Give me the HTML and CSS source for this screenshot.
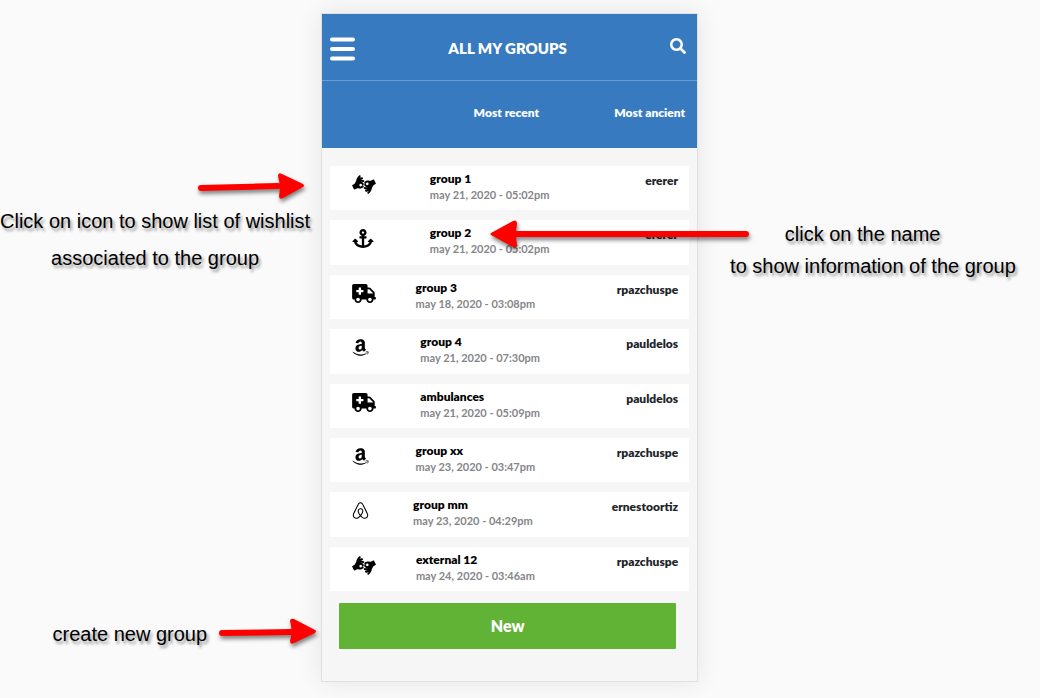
FILE: index.html
```html
<!DOCTYPE html>
<html lang="en">
<head>
<meta charset="utf-8">
<meta name="viewport" content="width=device-width, initial-scale=1">
<title>All my groups</title>
<link rel="stylesheet" href="styles.css">
</head>
<body>
<svg class="sprite" aria-hidden="true">
  <symbol id="signs" viewBox="0 0 640 512"><path d="M290.547 189.039c-20.295-10.149-44.147-11.199-64.739-3.89 42.606 0 71.208 20.475 85.578 50.576 8.576 17.899-5.148 38.071-23.617 38.071 18.429 0 32.211 20.136 23.632 38.071-14.725 30.846-46.123 50.854-80.298 50.854-.557 0-94.471-8.615-94.471-8.615l-66.406 33.347c-9.384 4.693-19.815.379-23.895-7.781L1.86 290.747c-4.167-8.615-1.111-18.897 6.946-23.621l58.072-33.069L108 159.861c6.39-57.245 34.731-109.767 79.743-146.726 11.391-9.448 28.341-7.781 37.51 3.613 9.446 11.394 7.78 28.067-3.612 37.516-12.503 10.559-23.618 22.509-32.509 35.57 21.672-14.729 46.679-24.732 74.186-28.067 14.725-1.945 28.063 8.336 29.73 23.065 1.945 14.728-8.336 28.067-23.062 29.734-16.116 1.945-31.12 7.503-44.178 15.284 26.114-5.713 58.712-3.138 88.079 11.115 13.336 6.669 18.893 22.509 12.224 35.848-6.389 13.06-22.504 18.617-35.564 12.226zm-27.229 69.472c-6.112-12.505-18.338-20.286-32.231-20.286a35.46 35.46 0 0 0-35.565 35.57c0 21.428 17.808 35.57 35.565 35.57 13.893 0 26.119-7.781 32.231-20.286 4.446-9.449 13.614-15.006 23.339-15.284-9.725-.277-18.893-5.835-23.339-15.284zm374.821-37.237c4.168 8.615 1.111 18.897-6.946 23.621l-58.071 33.069L532 352.16c-6.39 57.245-34.731 109.767-79.743 146.726-10.932 9.112-27.799 8.144-37.51-3.613-9.446-11.394-7.78-28.067 3.613-37.516 12.503-10.559 23.617-22.509 32.508-35.57-21.672 14.729-46.679 24.732-74.186 28.067-10.021 2.506-27.552-5.643-29.73-23.065-1.945-14.728 8.336-28.067 23.062-29.734 16.116-1.946 31.12-7.503 44.178-15.284-26.114 5.713-58.712 3.138-88.079-11.115-13.336-6.669-18.893-22.509-12.224-35.848 6.389-13.061 22.505-18.619 35.565-12.227 20.295 10.149 44.147 11.199 64.739 3.89-42.606 0-71.208-20.475-85.578-50.576-8.576-17.899 5.148-38.071 23.617-38.071-18.429 0-32.211-20.136-23.633-38.071 14.033-29.396 44.039-50.887 81.966-50.854l92.803 8.615 66.406-33.347c9.408-4.704 19.828-.354 23.894 7.781l44.455 88.926zm-229.227-18.618c-13.893 0-26.119 7.781-32.231 20.286-4.446 9.449-13.614 15.006-23.339 15.284 9.725.278 18.893 5.836 23.339 15.284 6.112 12.505 18.338 20.286 32.231 20.286a35.46 35.46 0 0 0 35.565-35.57c0-21.429-17.808-35.57-35.565-35.57z"/></symbol>
  <symbol id="anchor" viewBox="0 0 576 512"><path d="M12.971 352h32.394C67.172 454.735 181.944 512 288 512c106.229 0 220.853-57.38 242.635-160h32.394c10.691 0 16.045-12.926 8.485-20.485l-67.029-67.029c-4.686-4.686-12.284-4.686-16.971 0l-67.029 67.029c-7.56 7.56-2.206 20.485 8.485 20.485h35.146c-20.29 54.317-84.963 86.588-144.117 94.015V256h52c6.627 0 12-5.373 12-12v-40c0-6.627-5.373-12-12-12h-52v-5.47c37.281-13.226 63.993-48.886 63.993-90.747C383.98 43.001 340.888-.039 287.884.001 234.963.04 192 42.949 192 96c0 41.798 26.712 77.409 64 90.53V192h-52c-6.627 0-12 5.373-12 12v40c0 6.627 5.373 12 12 12h52v190.015c-58.936-7.399-123.82-39.679-144.117-94.015h35.146c10.691 0 16.045-12.926 8.485-20.485l-67.029-67.029c-4.686-4.686-12.284-4.686-16.971 0L4.485 331.515C-3.074 339.074 2.28 352 12.971 352zM288 64c17.645 0 32 14.355 32 32s-14.355 32-32 32-32-14.355-32-32 14.355-32 32-32z"/></symbol>
  <symbol id="ambulance" viewBox="0 0 640 512"><path d="M624 352h-16V243.9c0-12.7-5.1-24.9-14.1-33.9L494 110.1c-9-9-21.2-14.1-33.9-14.1H416V48c0-26.5-21.5-48-48-48H48C21.5 0 0 21.5 0 48v320c0 26.5 21.5 48 48 48h16c0 53 43 96 96 96s96-43 96-96h128c0 53 43 96 96 96s96-43 96-96h48c8.8 0 16-7.2 16-16v-32c0-8.8-7.2-16-16-16zM160 464c-26.5 0-48-21.5-48-48s21.5-48 48-48 48 21.5 48 48-21.5 48-48 48zm144-248c0 4.4-3.6 8-8 8h-56v56c0 4.4-3.6 8-8 8h-48c-4.4 0-8-3.6-8-8v-56h-56c-4.4 0-8-3.6-8-8v-48c0-4.4 3.6-8 8-8h56v-56c0-4.4 3.6-8 8-8h48c4.4 0 8 3.6 8 8v56h56c4.4 0 8 3.6 8 8v48zm176 248c-26.5 0-48-21.5-48-48s21.5-48 48-48 48 21.5 48 48-21.5 48-48 48zm80-208H416V144h44.1l99.9 99.9V256z"/></symbol>
  <symbol id="amazon" viewBox="0 0 448 512"><path d="M257.2 162.7c-48.7 1.8-169.5 15.5-169.5 117.5 0 109.5 138.3 114 183.5 43.2 6.5 10.2 35.4 37.5 45.3 46.8l56.8-56S341 288.9 341 261.4V114.3C341 89 316.5 32 228.7 32 140.7 32 94 87 94 136.3l73.5 6.8c16.3-49.5 54.2-49.5 54.2-49.5 40.7-.1 35.5 29.8 35.5 69.1zm0 86.8c0 80-84.2 68-84.2 17.2 0-47.2 50.5-56.7 84.2-57.8v40.6zm136 163.5c-7.7 10-70 67-174.5 67S34.2 408.5 9.7 379c-6.8-7.7 1-11.3 5.5-8.3C88.5 415.2 203 488.5 387.7 401c7.5-3.7 13.3 2 5.5 12zm39.8 2.2c-6.5 15.8-16 26.8-21.2 31-5.5 4.5-9.5 2.7-6.5-3.8s19.3-46.5 12.7-55c-6.5-8.3-37-4.3-48-3.2-10.8 1-13 2-14-.3-2.3-5.7 21.7-15.5 37.5-17.5 15.7-1.8 41-.8 46 5.7 3.7 5.1 0 27.1-6.5 43.1z"/></symbol>
  <symbol id="airbnb" viewBox="0 0 448 512"><path d="M224 373.12c-25.24-31.67-40.08-59.43-45-83.18-22.55-88 112.61-88 90.06 0-5.45 24.25-20.29 52-45 83.18zm138.15 73.23c-42.06 18.31-83.67-10.88-119.3-50.47 103.9-130.07 46.11-200-18.85-200-54.92 0-85.16 46.51-73.28 100.5 6.93 29.19 25.23 62.39 54.43 99.5-32.53 36.05-60.55 52.69-85.15 54.92-50 7.43-89.11-41.06-71.3-91.09 15.1-39.16 111.72-231.18 115.87-241.56 15.75-30.07 25.56-57.4 59.38-57.4 32.34 0 43.4 25.94 60.37 59.87 36 70.62 89.35 177.48 114.84 239.09 13.17 33.07-1.37 71.29-37.01 86.64zm47-136.12C280.27 35.93 273.13 32 224 32c-45.52 0-64.87 31.67-84.66 72.79C33.18 317.1 22.89 347.19 22 349.81-3.22 419.14 48.74 480 111.63 480c21.71 0 60.61-6.06 112.37-62.4 58.68 63.78 101.26 62.4 112.37 62.4 62.89.05 114.85-60.86 89.61-130.19.02-3.89-16.82-38.9-16.82-39.58z"/></symbol>
</svg>

<div class="stage">
  <aside class="notes notes-left">
    <div class="note note-icon">
      <svg class="arrow" width="108" height="32" viewBox="0 0 108 32"><path class="shaft" d="M3 17L80 15"/><path class="head" d="M80 5Q80 1 84 3L105 13Q107 15 105 16L85 27Q81 29 81 25Q83 15 80 5Z"/></svg>
      <p>Click on icon to show list of wishlist<br>associated to the group</p>
    </div>
    <div class="note note-create">
      <p>create new group</p>
      <svg class="arrow" width="100" height="32" viewBox="0 0 100 32"><path class="shaft" d="M5 15L74 14"/><path class="head" d="M73 3Q73 0 77 1L98 12Q100 13 98 15L77 25Q73 27 73 23Q76 13 73 3Z"/></svg>
    </div>
  </aside>

  <main class="device">
    <header class="topbar">
      <button class="icon-button menu" type="button" aria-label="Menu"><svg viewBox="0 0 26 24"><path d="M3 2.500H24M3 12H24M3 21.500H24"/></svg></button>
      <h1>ALL MY GROUPS</h1>
      <button class="icon-button search" type="button" aria-label="Search"><svg viewBox="0 0 512 512"><path d="M505 442.700L405.300 343c-4.500-4.500-10.600-7-17-7H372c27.600-35.300 44-79.700 44-128C416 93.100 322.900 0 208 0S0 93.100 0 208s93.100 208 208 208c48.300 0 92.700-16.400 128-44v16.300c0 6.400 2.500 12.500 7 17l99.700 99.700c9.400 9.400 24.600 9.400 33.900 0l28.300-28.300c9.400-9.400 9.400-24.600.1-34zM208 336c-70.700 0-128-57.200-128-128 0-70.700 57.200-128 128-128 70.700 0 128 57.200 128 128 0 70.700-57.200 128-128 128z"/></svg></button>
    </header>
    <nav class="sorting" aria-label="Sort groups">
      <a href="#recent">Most recent</a>
      <a href="#ancient">Most ancient</a>
    </nav>

    <ul class="groups">
      <li class="group">
        <button class="icon-button group-icon" type="button" aria-label="Wishlists of group 1"><svg class="wide"><use href="#signs"/></svg></button>
        <div class="details"><div><a href="#g1">group 1</a><time>may 21, 2020 - 05:02pm</time></div></div>
        <span class="owner">ererer</span>
      </li>
      <li class="group">
        <button class="icon-button group-icon" type="button" aria-label="Wishlists of group 2"><svg class="medium"><use href="#anchor"/></svg></button>
        <div class="details"><div><a href="#g2">group 2</a><time>may 21, 2020 - 05:02pm</time></div></div>
        <span class="owner">ererer</span>
      </li>
      <li class="group">
        <button class="icon-button group-icon" type="button" aria-label="Wishlists of group 3"><svg class="wide"><use href="#ambulance"/></svg></button>
        <div class="details"><div><a href="#g3">group 3</a><time>may 18, 2020 - 03:08pm</time></div></div>
        <span class="owner">rpazchuspe</span>
      </li>
      <li class="group">
        <button class="icon-button group-icon" type="button" aria-label="Wishlists of group 4"><svg class="narrow"><use href="#amazon"/></svg></button>
        <div class="details"><div><a href="#g4">group 4</a><time>may 21, 2020 - 07:30pm</time></div></div>
        <span class="owner">pauldelos</span>
      </li>
      <li class="group">
        <button class="icon-button group-icon" type="button" aria-label="Wishlists of ambulances"><svg class="wide"><use href="#ambulance"/></svg></button>
        <div class="details"><div><a href="#g5">ambulances</a><time>may 21, 2020 - 05:09pm</time></div></div>
        <span class="owner">pauldelos</span>
      </li>
      <li class="group">
        <button class="icon-button group-icon" type="button" aria-label="Wishlists of group xx"><svg class="narrow"><use href="#amazon"/></svg></button>
        <div class="details"><div><a href="#g6">group xx</a><time>may 23, 2020 - 03:47pm</time></div></div>
        <span class="owner">rpazchuspe</span>
      </li>
      <li class="group">
        <button class="icon-button group-icon" type="button" aria-label="Wishlists of group mm"><svg class="narrow"><use href="#airbnb"/></svg></button>
        <div class="details"><div><a href="#g7">group mm</a><time>may 23, 2020 - 04:29pm</time></div></div>
        <span class="owner">ernestoortiz</span>
      </li>
      <li class="group">
        <button class="icon-button group-icon" type="button" aria-label="Wishlists of external 12"><svg class="wide"><use href="#signs"/></svg></button>
        <div class="details"><div><a href="#g8">external 12</a><time>may 24, 2020 - 03:46am</time></div></div>
        <span class="owner">rpazchuspe</span>
      </li>
    </ul>
    <button class="new" type="button">New</button>
  </main>

  <aside class="notes notes-right">
    <div class="note note-name">
      <svg class="arrow arrow-long" width="264" height="32" viewBox="0 0 264 32"><path class="shaft" d="M26 16H256"/><path class="head" d="M27 6Q27 1 23 3L1 15Q0 16 1 17L23 29Q27 31 27 26Q25 16 27 6Z"/></svg>
      <p class="note-first">click on the name</p>
      <p>to show information of the group</p>
    </div>
  </aside>
</div>
</body>
</html>
```
FILE: styles.css
```css
* {
  box-sizing: border-box;
}

body {
  margin: 0;
  background: #fafafa;
  font-family: Lato, "Liberation Sans", sans-serif;
  font-weight: 800;
}

h1, p, ul {
  margin: 0;
  padding: 0;
}

a {
  color: inherit;
  text-decoration: none;
}

.sprite {
  position: absolute;
  width: 0;
  height: 0;
}

.stage {
  display: flex;
  min-height: 100vh;
  padding: 13px 21px 16px 0;
}

/* Annotations */
.notes {
  display: flex;
  flex: 1 1 0;
  flex-direction: column;
}

.note {
  font-family: "Liberation Sans", Arial, sans-serif;
  font-size: 20px;
  font-weight: 400;
  color: #000;
  white-space: nowrap;
  text-shadow: 2px 3px 3px rgba(0, 0, 0, 0.4);
}

.arrow {
  flex: none;
  filter: drop-shadow(1px 3px 2px rgba(0, 0, 0, 0.5));
}

.shaft {
  fill: none;
  stroke: #f00;
  stroke-width: 6;
  stroke-linecap: round;
}

.head {
  fill: #f00;
}

.notes-left {
  justify-content: space-between;
  padding: 158px 0 32px;
}

.note-icon {
  display: flex;
  flex-direction: column;
  padding-right: 11px;
  line-height: 37px;
  text-align: center;
}

.note-icon .arrow {
  align-self: flex-end;
  margin-right: 4px;
}

.note-create {
  display: flex;
  align-items: center;
  justify-content: flex-end;
  gap: 10px;
  padding-right: 4px;
  line-height: 32px;
}

.notes-right {
  padding: 205px 0 0 32px;
}

.note-name {
  position: relative;
  width: 285px;
  line-height: 32px;
}

.note-first {
  padding-right: 20px;
  text-align: center;
}

.arrow-long {
  position: absolute;
  top: 0;
  left: -240px;
}

/* Application */
.device {
  display: flex;
  flex: 0 0 377px;
  flex-direction: column;
  padding-bottom: 32px;
  background: #f6f6f6;
  border: 1px solid #e0e0e0;
  box-shadow: 0 0 24px rgba(0, 0, 0, 0.09);
}

.icon-button {
  display: flex;
  padding: 0;
  background: none;
  border: 0;
  cursor: pointer;
}

.topbar {
  display: grid;
  grid-template-columns: 1fr auto 1fr;
  align-items: center;
  height: 67px;
  padding: 0 11px 0 7px;
  color: #fff;
  background: #377abf;
  border-bottom: 1px solid #6a9dd1;
}

.topbar h1 {
  padding-top: 1px;
  font-size: 15px;
  font-weight: 800;
  line-height: 20px;
}

.menu svg {
  width: 26px;
  height: 24px;
  margin-top: 3px;
  fill: none;
  stroke: #fff;
  stroke-width: 4;
  stroke-linecap: round;
}

.search {
  justify-self: end;
}

.search svg {
  width: 16px;
  height: 16px;
  margin-bottom: 2px;
  fill: #fff;
}

.sorting {
  display: flex;
  align-items: center;
  justify-content: flex-end;
  gap: 75px;
  height: 67px;
  padding: 0 12px 4px;
  font-size: 12px;
  color: #fff;
  background: #377abf;
}

.groups {
  display: grid;
  flex: 1;
  grid-auto-rows: 1fr;
  gap: 10px;
  padding: 18px 8px 12px;
  list-style: none;
}

.group {
  display: flex;
  align-items: flex-start;
  padding: 5px 11px 5px 22px;
  background: #fff;
}

.group-icon {
  flex: none;
  width: 24px;
  padding-top: 4px;
}

.group-icon svg {
  height: 19px;
}

.wide {
  width: 24px;
}

.medium {
  width: 22px;
}

.narrow {
  width: 17px;
}

.details {
  display: flex;
  flex: 1;
  justify-content: center;
  padding-right: 42px;
}

.details a,
.details time {
  display: block;
  line-height: 16px;
  white-space: nowrap;
}

.details a {
  font-size: 12px;
  color: #000;
}

.details time {
  font-size: 11px;
  font-weight: 700;
  color: #85868a;
}

.owner {
  padding-top: 2px;
  font-size: 12px;
  line-height: 16px;
  color: #212529;
}

.new {
  height: 46px;
  margin: 0 21px 0 17px;
  padding: 0 0 2px;
  font: inherit;
  font-size: 16px;
  color: #fff;
  background: #61b335;
  border: 0;
  border-radius: 1px;
  cursor: pointer;
}
```
